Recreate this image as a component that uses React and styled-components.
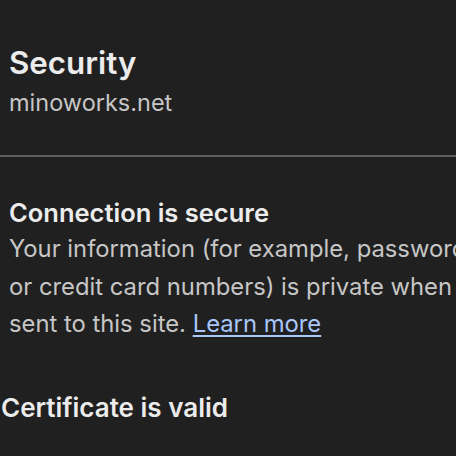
import styled, { createGlobalStyle } from "styled-components";

const Global = createGlobalStyle`
  html, body {
    margin: 0;
    padding: 0;
    background: #202020;
    overflow: hidden;
  }
  body {
    font-family: Inter, "Noto Sans", sans-serif;
    -webkit-font-smoothing: antialiased;
  }
`;

const Page = styled.div`
  width: 456px;
  height: 456px;
  overflow: hidden;
  background: #202020;
  display: flex;
  flex-direction: column;
`;

const Header = styled.header`
  padding: 44px 0 0 9px;
  display: flex;
  flex-direction: column;
  gap: 6px;
`;

const Title = styled.h1`
  margin: 0;
  font-size: 31.3px;
  line-height: 38px;
  font-weight: 600;
  color: #ececec;
`;

const Host = styled.div`
  font-size: 23.5px;
  line-height: 30px;
  color: #c6c6c6;
  white-space: nowrap;
`;

const Divider = styled.hr`
  margin: 37px 0 0;
  border: 0;
  height: 2px;
  background: #5e5e5e;
`;

const Section = styled.section`
  padding: ${(p) => p.$pad || "0 0 0 9px"};
  margin-top: ${(p) => p.$top || "0"};
  display: flex;
  flex-direction: column;
  gap: 2px;
  white-space: nowrap;
`;

const Heading = styled.h2`
  margin: 0;
  font-size: ${(p) => p.$size || "25.5px"};
  line-height: 30px;
  font-weight: 600;
  color: #ececec;
`;

const Body = styled.p`
  margin: 0;
  font-size: 23.8px;
  line-height: 37.5px;
  color: #c6c6c6;
`;

const Link = styled.a`
  color: #a8c7fa;
  text-decoration: underline;
  text-underline-offset: 3px;
`;

export default function App() {
  return (
    <Page>
      <Global />
      <Header>
        <Title>Security</Title>
        <Host>minoworks.net</Host>
      </Header>
      <Divider />
      <Section $top="41px">
        <Heading>Connection is secure</Heading>
        <Body>
          Your information (for example, passwords
          <br />
          or credit card numbers) is private when it is
          <br />
          sent to this site. <Link href="#">Learn more</Link>
        </Body>
      </Section>
      <Section $top="50px" $pad="0 0 0 1px">
        <Heading $size="26px">Certificate is valid</Heading>
      </Section>
    </Page>
  );
}
